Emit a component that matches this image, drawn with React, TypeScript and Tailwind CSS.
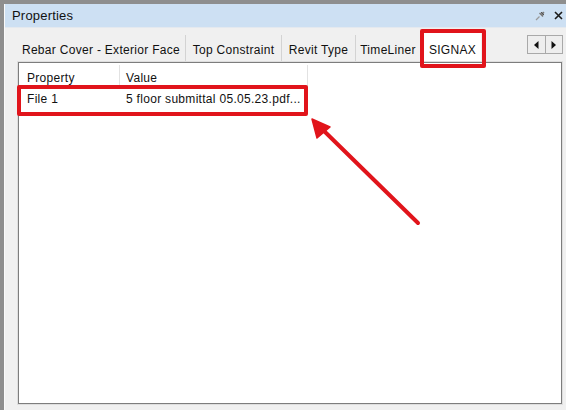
import React from "react";

const font = { fontFamily: '"Liberation Sans", Arial, sans-serif' };

function PinIcon() {
  return (
    <svg width="11" height="11" viewBox="0 0 11 11">
      <path d="M1 10 L4.5 6.5" stroke="#9a9a9a" strokeWidth="1.2" />
      <path d="M4 3.5 L7.5 7 L8.5 6 L7.8 4.6 L9.6 2.8 L8.2 1.4 L6.4 3.2 L5 2.5 Z" fill="#7b7b7b" />
      <path d="M6 2 L9 5" stroke="#555" strokeWidth="1" />
    </svg>
  );
}

function CloseIcon() {
  return (
    <svg width="9" height="9" viewBox="0 0 9 9">
      <path d="M1 1 L8 8 M8 1 L1 8" stroke="#1a1a1a" strokeWidth="1.6" />
    </svg>
  );
}

const tabs = [
  { label: "Rebar Cover - Exterior Face", w: 169 },
  { label: "Top Constraint", w: 96 },
  { label: "Revit Type", w: 74 },
  { label: "TimeLiner", w: 65 },
];

export default function App() {
  return (
    <div
      className="relative w-[566px] h-[410px] overflow-hidden bg-[#8e8e8e] pt-[4px] pl-[4px] text-[#111]"
      style={font}
    >
      <div className="flex h-full flex-col bg-[#f0f0f0] border-l border-[#fafafa]">
        {/* title bar */}
        <div className="flex h-[24px] items-center justify-between bg-[#cde0f3] pl-[7px] pr-[3px] border-b border-[#e4e9ef]">
          <span className="text-[13px] tracking-[0.2px] text-[#111]">Properties</span>
          <div className="flex items-center gap-[8px]">
            <PinIcon />
            <CloseIcon />
          </div>
        </div>

        {/* tab strip */}
        <div className="flex h-[33px] items-end pl-[12px] pr-[3px]">
          <div className="flex h-[26px] items-stretch">
            {tabs.map((t) => (
              <div
                key={t.label}
                className="flex items-center justify-center pt-[3px] text-[12px] tracking-[0.3px] text-[#111] border-r border-[#d3d3d3]"
                style={{ width: t.w }}
              >
                {t.label}
              </div>
            ))}
            <div className="mt-[-2px] flex w-[60px] items-start justify-center bg-white pt-[8px] pl-[3px] text-[12px] tracking-[0.3px] text-[#111]">
              SIGNAX
            </div>
          </div>
          <div className="ml-auto mb-[7px] flex h-[19px] w-[36px] border border-[#a9a9a9] bg-[#eeeeee]">
            <div className="flex flex-1 items-center justify-center border-r border-[#a9a9a9]">
              <svg width="5" height="8" viewBox="0 0 5 8">
                <path d="M4.5 0 L0 4 L4.5 8 Z" fill="#111" />
              </svg>
            </div>
            <div className="flex flex-1 items-center justify-center">
              <svg width="5" height="8" viewBox="0 0 5 8">
                <path d="M0.5 0 L5 4 L0.5 8 Z" fill="#111" />
              </svg>
            </div>
          </div>
        </div>

        {/* content pane */}
        <div className="ml-[12px] mr-[3px] h-[344px] border border-[#dedede] bg-white">
          <div className="h-full border border-[#7d7d7d] bg-white pl-[1px] pt-[2px]">
            <div className="flex h-[22px] w-[288px] items-center text-[12px] tracking-[0.3px]">
              <div className="h-full w-[100px] border-r border-[#e2e2e2] pl-[7px] leading-[26px]">Property</div>
              <div className="h-full flex-1 border-r border-[#e2e2e2] pl-[6px] leading-[26px]">Value</div>
            </div>
            <div className="flex h-[24px] w-[288px] items-center text-[12px] tracking-[0.3px]">
              <div className="w-[100px] pl-[7px]">File 1</div>
              <div className="flex-1 pl-[6px] whitespace-nowrap">5 floor submittal 05.05.23.pdf...</div>
            </div>
          </div>
        </div>
      </div>

      {/* callout markings */}
      <div className="absolute left-[420px] top-[29px] h-[39px] w-[66px] rounded-[2px] border-[4px] border-[#e1141b]" />
      <div className="absolute left-[17px] top-[85px] h-[31px] w-[291px] rounded-[2px] border-[4px] border-[#e1141b]" />
      <svg className="absolute left-0 top-0" width="566" height="410" viewBox="0 0 566 410">
        <path d="M418 223 L322 129" stroke="#e1141b" strokeWidth="4" strokeLinecap="round" />
        <path d="M312 119 L317 138 L330 127 Z" fill="#e1141b" stroke="#e1141b" strokeWidth="1.5" strokeLinejoin="round" />
      </svg>
    </div>
  );
}
